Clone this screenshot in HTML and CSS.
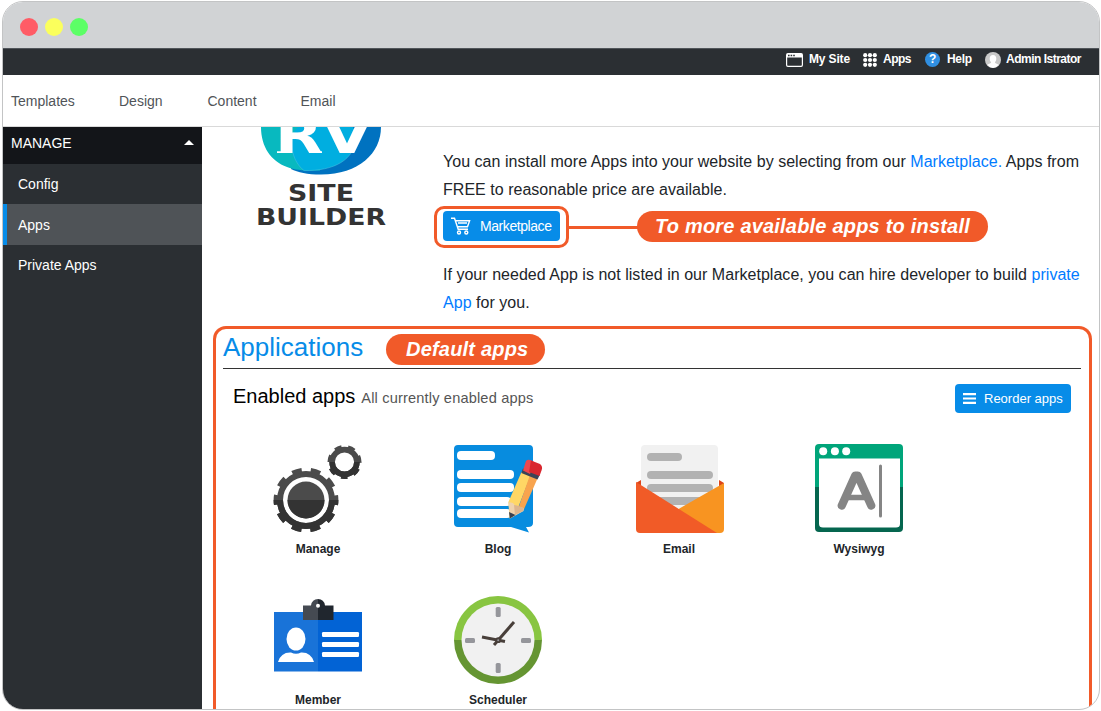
FILE: index.html
```html
<!DOCTYPE html>
<html lang="en">
<head>
<meta charset="utf-8">
<title>RV Site Builder</title>
<link rel="stylesheet" href="styles.css">
</head>
<body>
<div class="window">
  <div class="titlebar"><i class="dot red"></i><i class="dot yellow"></i><i class="dot green"></i></div>
  <header class="topbar">
    <span class="tool site"><svg width="17" height="14" viewBox="0 0 17 14"><rect x=".6" y=".6" width="15.8" height="12.8" rx="1.3" fill="none" stroke="#fff" stroke-width="1.2"/><path d="M1 1h15v3.600H1z" fill="#fff"/><path d="M2 1.800h1.600v1.500H2zM4.600 1.800h1.600v1.500H4.600zM7.200 1.800h1.600v1.500H7.200z" fill="#2b2f33"/></svg>My Site</span>
    <span class="tool grid"><svg width="14" height="14" viewBox="0 0 14 14" fill="#fff"><circle cx="2.200" cy="2.200" r="2.100"/><circle cx="7" cy="2.200" r="2.100"/><circle cx="11.800" cy="2.200" r="2.100"/><circle cx="2.200" cy="7" r="2.100"/><circle cx="7" cy="7" r="2.100"/><circle cx="11.800" cy="7" r="2.100"/><circle cx="2.200" cy="11.800" r="2.100"/><circle cx="7" cy="11.800" r="2.100"/><circle cx="11.800" cy="11.800" r="2.100"/></svg>Apps</span>
    <span class="tool help"><b class="question">?</b>Help</span>
    <span class="tool user"><svg width="16" height="16" viewBox="0 0 16 16"><circle cx="8" cy="8" r="8" fill="#c9c9c9"/><path d="M8 3c2.200 0 3.300 1.600 3.300 3.600 0 1.600-.5 2.900-1.400 3.700.2 1.300 1.700 1.500 3.900 2.500A8 8 0 0 1 8 16a8 8 0 0 1-5.800-3.200c2.200-1 3.700-1.200 3.900-2.500-.9-.8-1.400-2.100-1.400-3.700C4.700 4.600 5.800 3 8 3z" fill="#fff"/></svg>Admin Istrator</span>
  </header>
  <nav class="menu"><span class="m1">Templates</span><span class="m2">Design</span><span class="m3">Content</span><span>Email</span></nav>
  <div class="body">
    <aside class="sidebar">
      <div class="section">MANAGE<i class="caret"></i></div>
      <div class="item">Config</div>
      <div class="item active">Apps</div>
      <div class="item">Private Apps</div>
    </aside>
    <main class="main">
      <section class="intro">
        <svg class="logo" width="136" height="104" viewBox="254 127 136 104">
          <path d="M300 127H381C381 153 359 174.500 321 174.500C307 174.500 298 172.500 291 169Z" fill="#0072c0"/>
          <path d="M261 127H320V170.500C306 170.800 296 170.500 287 167C271 161 261 147 261 127Z" fill="#08b9bf"/>
          <path d="M298 127C293 132 291 137 291 143C291 155 297 165 304 170.600C334 171 355 160 356 137Q356 132 353 127Z" fill="#00aee0"/>
          <path d="M294 132C289 145 293 162 304 170.600C334 171 355 160 356 137" fill="none" stroke="#4fc5e1" stroke-width=".5"/>
          <text x="275" y="153" class="logo-rv" textLength="48" lengthAdjust="spacingAndGlyphs">R</text>
          <path d="M277 151.200H290V153H277ZM309 151.200H322V153H309Z" fill="#fff"/>
          <text x="322" y="153" class="logo-rv" textLength="50" lengthAdjust="spacingAndGlyphs">V</text>
          <text x="288" y="201" class="logo-name" textLength="66" lengthAdjust="spacingAndGlyphs">SITE</text>
          <text x="256" y="224.500" class="logo-name" textLength="130" lengthAdjust="spacingAndGlyphs">BUILDER</text>
        </svg>
        <div class="copy">
          <p>You can install more Apps into your website by selecting from our <a>Marketplace</a><a>.</a> Apps from<br>FREE to reasonable price are available.</p>
          <div class="action">
            <span class="btn market"><svg width="20" height="18" viewBox="0 0 20 18" fill="none" stroke="#fff" stroke-width="1.400"><path d="M0 1.200h3.500L7.200 12.300H17M4.400 3.800H18.600L16.500 9.700H6.300M7 6h9"/><circle cx="8" cy="15.500" r="1.500"/><circle cx="15.300" cy="15.500" r="1.500"/></svg>Marketplace</span>
            <i class="ring"></i><i class="line"></i><span class="pill pill-market">To more available apps to install</span>
          </div>
          <p>If your needed App is not listed in our Marketplace, you can hire developer to build <a>private</a><br><a>App</a> for you.</p>
        </div>
      </section>
      <section class="apps">
        <div class="heading"><h1>Applications</h1><span class="pill pill-default">Default apps</span></div>
        <div class="subhead"><h2>Enabled apps</h2><small>All currently enabled apps</small><span class="btn reorder"><svg width="13" height="11" viewBox="0 0 13 11"><path d="M0 0h13v2.200H0zM0 4.400h13v2.200H0zM0 8.800h13V11H0z" fill="#fff"/></svg>Reorder apps</span></div>
        <div class="cards">
          <div class="card">
            <svg width="88" height="88" viewBox="274 444 88 88">
              <defs>
                <g id="gears" stroke="currentColor" fill="none">
                  <circle cx="306" cy="500" r="26" stroke-width="6"/>
                  <circle cx="306" cy="500" r="29.900" stroke-width="5" stroke-dasharray="9.800 8.987" stroke-dashoffset="4.900"/>
                  <circle cx="306" cy="500" r="18.500" stroke="none" fill="currentColor"/>
                  <circle cx="344.500" cy="462" r="12.400" stroke-width="5.600"/>
                  <circle cx="344.500" cy="462" r="15.300" stroke-width="3.400" stroke-dasharray="7 6.733" stroke-dashoffset="3.500" transform="rotate(90 344.500 462)"/>
                </g>
                <clipPath id="lower"><path d="M270 500H341V536H270ZM326 462H366V482H335L326 474Z"/></clipPath>
              </defs>
              <use href="#gears" color="#4b4b4b"/>
              <g clip-path="url(#lower)"><use href="#gears" color="#333"/></g>
            </svg><b>Manage</b></div>
          <div class="card">
            <svg width="88" height="88" viewBox="454 444 88 88">
              <path d="M458 445H529Q533 445 533 449V523Q533 527 528 527L526 527 529 532.500 511 527H458Q454 527 454 523V449Q454 445 458 445Z" fill="#078cdf"/>
              <g fill="#fff"><rect x="457" y="451" width="38" height="9" rx="4"/><rect x="457" y="470" width="57" height="9" rx="4"/><rect x="457" y="483" width="57" height="9" rx="4"/><rect x="457" y="497" width="54" height="9" rx="4"/><rect x="457" y="509" width="54" height="9" rx="4"/></g>
              <path d="M521.500 472L530.500 476 515 515.500 509.500 518.500 508.400 502Z" fill="#ffd765"/><path d="M530 475L537.500 478.500 523.600 510 517 512Z" fill="#f8a44e"/>
              <path d="M508.400 502L513 503 516 506.500 523.600 508 523.600 511 510 518.500Z" fill="#efd2ad"/><path d="M514 505L517 505.500 523.600 508 523 511 515 515Z" fill="#ddb58d"/><path d="M509 512L515.500 515 509.800 518.600Z" fill="#394051"/>
              <path d="M523 468.500L540 474.500 537.500 479.500 521.300 473Z" fill="#3c4557"/><path d="M526 461Q528 459 531.500 460.500L534 462 530 474 523 470.500Z" fill="#ed464d"/><path d="M531 460.500L540 464Q543 466.500 541.700 470L539.500 476 529 472Z" fill="#d9282f"/>
            </svg><b>Blog</b></div>
          <div class="card c3">
            <svg width="88" height="88" viewBox="635 444 88 88">
              <path d="M636 483L641 480V488H719V480L724 483V499H636Z" fill="#dd4519"/><path d="M645 445H714Q718 445 718 449V508H641V449Q641 445 645 445Z" fill="#f1f1f1"/>
              <g fill="#b2b2b2"><rect x="647" y="453" width="35" height="8" rx="4"/><rect x="647" y="471" width="66" height="8" rx="4"/><rect x="647" y="484" width="66" height="8" rx="4"/><rect x="647" y="497" width="66" height="8" rx="4"/></g>
              <path d="M724 483V529Q724 533 720 533H660L678.500 509Z" fill="#f89421"/><path d="M636 482L717 533H640Q636 533 636 529Z" fill="#f15b27"/>
            </svg><b>Email</b></div>
          <div class="card c4">
            <svg width="88" height="88" viewBox="815 444 88 88">
              <path d="M815 488V448Q815 444 819 444H899Q903 444 903 448V488Z" fill="#00a57a"/><path d="M815 487H903V528Q903 532 899 532H819Q815 532 815 528Z" fill="#05664f"/>
              <path d="M819 458.500H900V524Q900 527.500 896 527.500H823Q819 527.500 819 524Z" fill="#fff"/><g fill="#fff"><circle cx="823.200" cy="451.200" r="4"/><circle cx="834.900" cy="451.200" r="4"/><circle cx="846.200" cy="451.200" r="4"/></g>
              <path d="M841.800 505.500L855.300 475.500H857.700L871.200 505.500" fill="none" stroke="#858585" stroke-width="8.200" stroke-linecap="round" stroke-linejoin="round"/><path d="M846.500 497.500H866.500" stroke="#858585" stroke-width="5.500"/><path d="M880.500 466V516" stroke="#858585" stroke-width="3" stroke-linecap="round"/>
            </svg><b>Wysiwyg</b></div>
          <div class="card row2">
            <svg width="88" height="88" viewBox="274 596 88 88">
              <path d="M274 612H318V671.500H274Z" fill="#1973d8"/><path d="M318 612H362V671.500H318Z" fill="#0263d5"/>
              <path d="M303 605.500H311Q312 599 318 599V620H303Z" fill="#454a52"/><path d="M318 599Q324 599 325 605.500H333.500V620H318Z" fill="#20262e"/><circle cx="318" cy="605.700" r="2" fill="#fff"/>
              <ellipse cx="296" cy="639" rx="9.500" ry="11.500" fill="#fff"/><path d="M278 662Q281 652 291 652.500Q296 655 301 652.500Q311 652 314 662Z" fill="#fff"/><g fill="#fff"><rect x="322" y="632" width="37" height="5" rx="1.300"/><rect x="322" y="642" width="37" height="5" rx="1.300"/><rect x="322" y="652" width="37" height="5" rx="1.300"/></g>
            </svg><b>Member</b></div>
          <div class="card row2">
            <svg width="88" height="88" viewBox="454 596 88 88">
              <path d="M454 640A44 44 0 0 1 542 640Z" fill="#88c541"/><path d="M454 640A44 44 0 0 0 542 640Z" fill="#659532"/><circle cx="498" cy="640" r="36.500" fill="#f1f1f1"/>
              <g fill="#95969b"><rect x="495.700" y="607" width="5" height="10" rx="1.500"/><rect x="495.700" y="663" width="5" height="10" rx="1.500"/><rect x="465" y="638" width="10" height="5" rx="1.500"/><rect x="521" y="638" width="10" height="5" rx="1.500"/></g>
              <path d="M482 637L505 641.500" stroke="#483f3a" stroke-width="3"/><path d="M494 645L514 622" stroke="#483f3a" stroke-width="3"/><circle cx="498.200" cy="640.200" r="2.900" fill="#483f3a"/><circle cx="498.200" cy="640.200" r="1" fill="#95969b"/>
            </svg><b>Scheduler</b></div>
        </div>
      </section>
    </main>
  </div>
</div>
</body>
</html>
```
FILE: styles.css
```css
* { box-sizing: border-box; }
body { margin: 0; padding: 1px 0 0 2px; width: 1101px; height: 711px; overflow: hidden; background: #fff; font-family: "Liberation Sans", Arial, sans-serif; color: #212529; }
svg { display: block; flex: none; }
a { color: #007bff; }
.window { display: flex; flex-direction: column; width: 1098px; height: 709px; border: 1px solid #c3c4c5; border-radius: 21px; overflow: hidden; }
.titlebar { height: 46px; flex: none; background: #d1d3d5; display: flex; align-items: center; gap: 7px; padding: 4px 0 0 17px; }
.dot { width: 18px; height: 18px; border-radius: 50%; }
.red { background: #ff5c66; }
.yellow { background: #fbff5c; }
.green { background: #5cff66; }
.topbar { height: 27px; flex: none; background: #2b2f33; border-top: 1px solid #50555a; display: flex; align-items: center; padding: 0 0 6px 783px; color: #fff; font-size: 12px; font-weight: bold; white-space: nowrap; }
.tool { display: flex; align-items: center; flex: none; }
.tool svg, .question { margin-top: 1px; }
.site { width: 77px; gap: 6px; letter-spacing: -.15px; }
.grid { width: 62px; gap: 6px; letter-spacing: -.5px; }
.help { width: 60px; gap: 7px; letter-spacing: -.3px; }
.user { gap: 5px; letter-spacing: -.5px; }
.question { width: 15px; height: 15px; border-radius: 50%; background: #308fe2; text-align: center; line-height: 15px; }
.menu { height: 52px; flex: none; border-bottom: 1px solid #d9d9d9; display: flex; align-items: center; padding-left: 8px; font-size: 14px; color: #505458; }
.m1 { width: 108px; }
.m2 { width: 88.5px; }
.m3 { width: 93px; }
.body { display: flex; flex: 1; min-height: 0; }
.sidebar { width: 199px; flex: none; background: #2b2f33; color: #fff; font-size: 14px; }
.section { height: 37px; background: #131519; display: flex; align-items: center; justify-content: space-between; padding: 0 8px 6px; }
.caret { border: 5px solid transparent; border-top: 0; border-bottom-color: #fff; }
.item { height: 40px; display: flex; align-items: center; padding-left: 15px; }
.active { height: 41px; background: #4f5357; border-left: 4px solid #078ce8; padding-left: 11px; }
.main { flex: 1; min-width: 0; padding: 0 7px 0 11px; display: flex; flex-direction: column; }
.intro { display: flex; height: 199px; flex: none; padding-left: 41px; }
.logo-rv { font: bold 50px "DejaVu Sans", sans-serif; fill: #fff; }
.logo-name { font: bold 23px "DejaVu Sans", sans-serif; fill: #333; }
.copy { padding: 21px 0 0 53px; font-size: 16px; line-height: 28px; letter-spacing: .028px; white-space: nowrap; }
.copy p { margin: 0; }
.action { position: relative; margin: 7px 0 20px; height: 30px; display: flex; }
.btn { background: #078ce8; color: #fff; border-radius: 4px; display: flex; align-items: center; }
.market { width: 117px; font-size: 14px; letter-spacing: -.43px; padding-left: 8px; gap: 9px; }
.ring { position: absolute; left: -9px; top: -5px; width: 135px; height: 42px; border: 3px solid #f15a29; border-radius: 10px; }
.line { position: absolute; left: 125px; top: 15px; width: 72px; height: 3px; background: #f15a29; }
.pill { background: #f15a29; color: #fff; border-radius: 16px; height: 31px; line-height: 31px; font-size: 20px; font-weight: bold; font-style: italic; letter-spacing: .2px; text-align: center; white-space: nowrap; }
.pill-market { position: absolute; left: 194px; top: 0; width: 351px; }
.apps { width: 879px; flex: 1; min-height: 0; border: 3px solid #f15a29; border-bottom: 0; border-radius: 13px 13px 0 0; padding: 0 8px 0 7px; }
.heading { height: 40px; border-bottom: 1px solid #333; display: flex; align-items: center; gap: 23px; }
h1 { margin: 0; padding-bottom: 3px; font-size: 26px; font-weight: normal; color: #078ce8; line-height: 30px; }
.pill-default { width: 159px; margin-top: 1px; padding-left: 3px; }
.subhead { height: 58px; display: flex; align-items: flex-start; padding: 15px 10px 0; }
h2 { margin: 0; font-size: 20px; font-weight: normal; color: #000; line-height: 24px; }
small { font-size: 14.6px; letter-spacing: .16px; line-height: 28px; color: #555; margin-left: 6px; }
.reorder { width: 116px; height: 29px; margin-left: auto; font-size: 13px; padding-left: 8px; gap: 8px; }
.cards { display: grid; grid-template-columns: repeat(4, 180px); grid-auto-rows: 152px; padding: 17px 0 0 5px; }
.card { display: flex; flex-direction: column; align-items: center; gap: 9px; font-size: 12px; line-height: 16px; }
.card svg { overflow: visible; }
.row2 { gap: 8px; }
.c3, .c4 { padding-left: 2px; }
```
